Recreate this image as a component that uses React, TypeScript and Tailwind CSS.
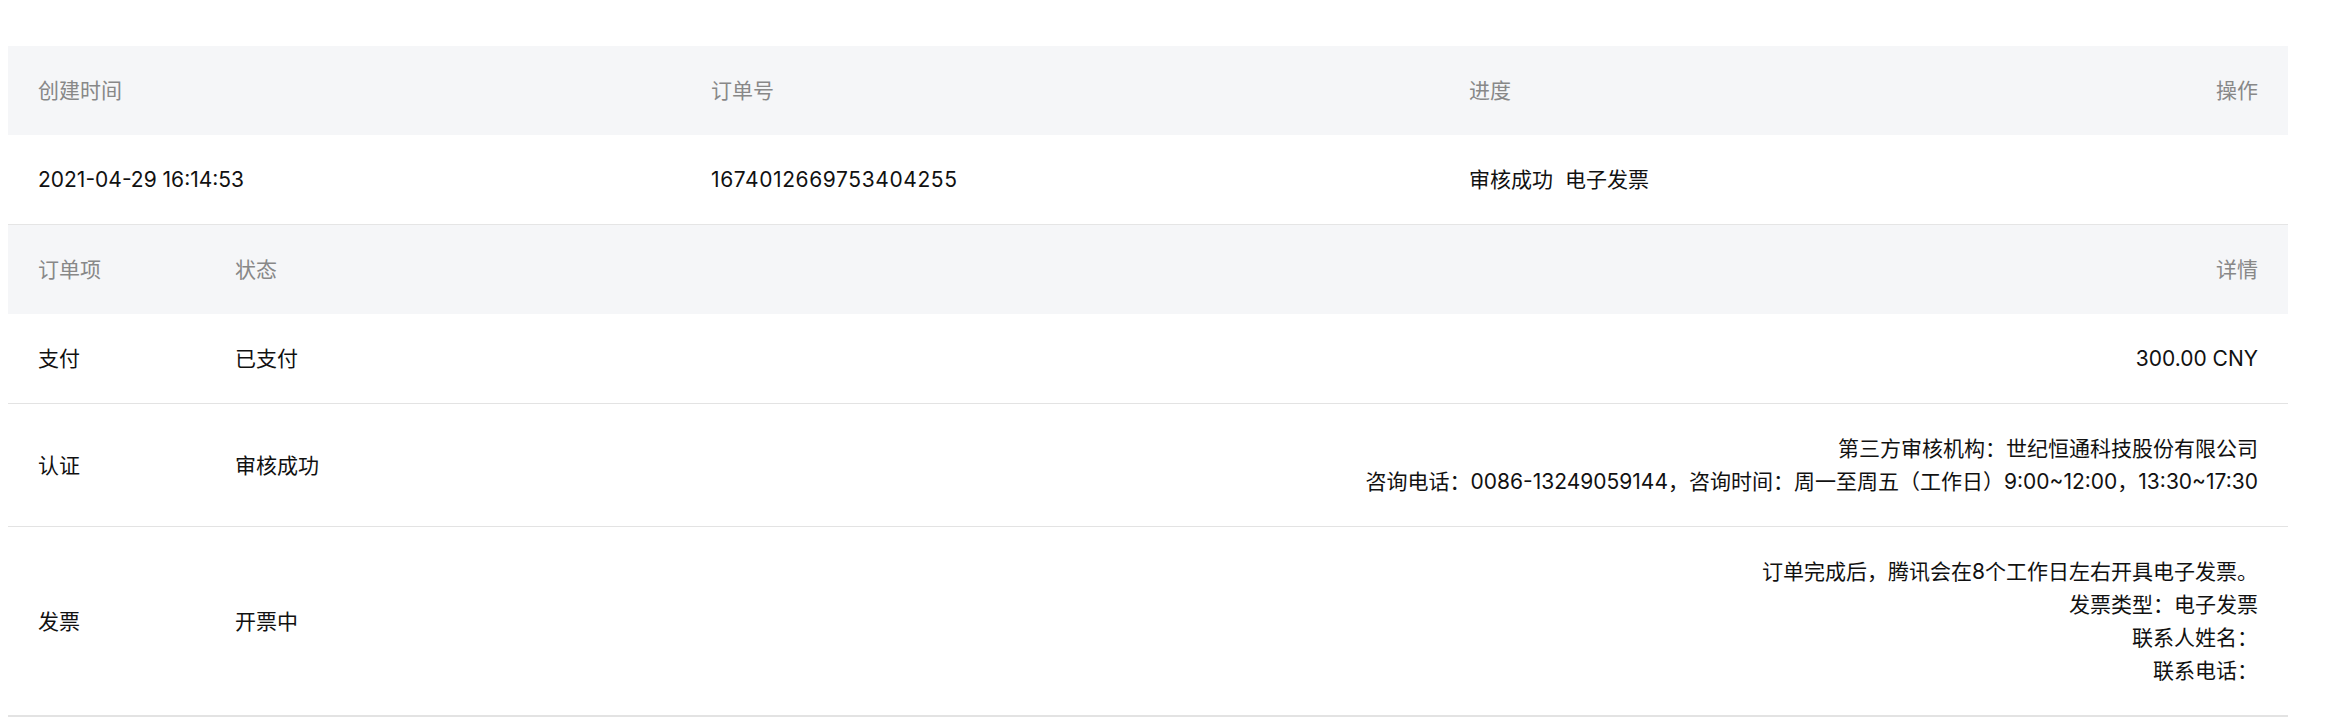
const font = { fontFamily: 'Inter, "Noto Sans CJK SC", sans-serif' };

const orderCols = "grid grid-cols-[673px_758px_1fr_auto]";
const itemCols = "grid grid-cols-[197px_1fr_auto]";

const items = [
  { name: "支付", status: "已支付", detail: ["300.00 CNY"] },
  {
    name: "认证",
    status: "审核成功",
    detail: [
      "第三方审核机构：世纪恒通科技股份有限公司",
      "咨询电话：0086-13249059144，咨询时间：周一至周五（工作日）9:00~12:00，13:30~17:30",
    ],
  },
  {
    name: "发票",
    status: "开票中",
    detail: ["订单完成后，腾讯会在8个工作日左右开具电子发票。", "发票类型：电子发票", "联系人姓名：", "联系电话："],
  },
];

export default function App() {
  return (
    <div className="min-h-screen bg-white pt-[46px] pl-[8px] pr-[55px]" style={font}>
      <div className="text-[21px] leading-[33px] text-[#111]">
        {/* 订单 */}
        <div className={`${orderCols} items-center bg-[#f5f6f8] text-[#888] py-[28px]`}>
          <div className="px-[30px]">创建时间</div>
          <div className="px-[30px]">订单号</div>
          <div className="px-[30px]">进度</div>
          <div className="px-[30px] text-right">操作</div>
        </div>
        <div className={`${orderCols} items-center py-[28px] border-b border-[#e5e5e5]`}>
          <div className="px-[30px]">2021-04-29 16:14:53</div>
          <div className="px-[30px] tracking-[0.6px]">1674012669753404255</div>
          <div className="px-[30px]">
            <span className="mr-3">审核成功</span>
            <span>电子发票</span>
          </div>
          <div className="px-[30px]" />
        </div>

        {/* 订单项 */}
        <div className={`${itemCols} items-center bg-[#f5f6f8] text-[#888] py-[28px]`}>
          <div className="px-[30px]">订单项</div>
          <div className="px-[30px]">状态</div>
          <div className="px-[30px] text-right">详情</div>
        </div>
        {items.map((it, i) => (
          <div
            key={it.name}
            className={`${itemCols} items-center py-[28px] border-[#e3e3e3] ${
              i === items.length - 1 ? "border-b-2" : "border-b"
            }`}
          >
            <div className="px-[30px]">{it.name}</div>
            <div className="px-[30px]">{it.status}</div>
            <div className="px-[30px] text-right whitespace-nowrap">
              {it.detail.map((d) => (
                <div key={d}>{d}</div>
              ))}
            </div>
          </div>
        ))}
      </div>
    </div>
  );
}
